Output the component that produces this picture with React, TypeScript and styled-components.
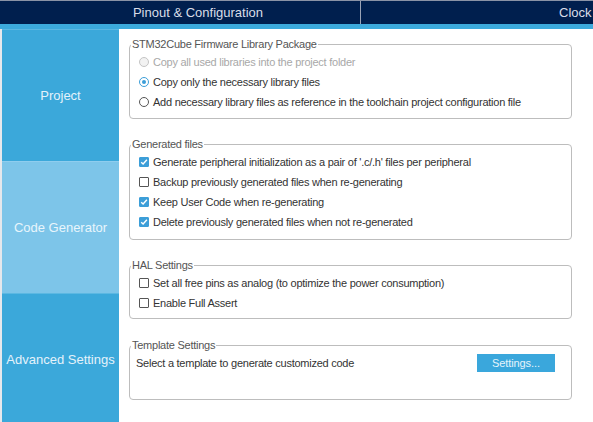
import React from "react"
import styled, { createGlobalStyle } from "styled-components"

const GlobalStyle = createGlobalStyle`
  html, body {
    margin: 0;
    padding: 0;
    background: #ffffff;
    font-family: "Liberation Sans", Arial, sans-serif;
  }
`

const Page = styled.div`
  width: 593px;
  height: 422px;
  overflow: hidden;
  display: flex;
  flex-direction: column;
  background: #ffffff;
`

const TopBar = styled.div`
  display: flex;
  height: 24px;
  background: #001f4e;
  border-top: 1px solid #8a93a6;
  box-sizing: border-box;
  flex: none;
`

const Tab = styled.div<{ width?: number; pad: number }>`
  ${(p) => (p.width ? `width: ${p.width}px; flex: none;` : "flex: 1;")}
  display: flex;
  align-items: center;
  justify-content: ${(p) => (p.width ? "center" : "flex-start")};
  padding-left: ${(p) => p.pad}px;
  box-sizing: border-box;
  color: #d8dde8;
  font-size: 13px;
  white-space: nowrap;
  overflow: hidden;
  border-right: ${(p) => (p.width ? "1px solid #9aa3b5" : "none")};
`

const Stripe = styled.div`
  height: 5px;
  background: #3caadc;
  flex: none;
`

const Body = styled.div`
  flex: 1;
  display: flex;
  min-height: 0;
`

const Sidebar = styled.div`
  width: 117px;
  margin-left: 2px;
  display: flex;
  flex-direction: column;
  flex: none;
  box-shadow: -2px 0 0 #e6e8ec;
`

const NavItem = styled.div<{ active?: boolean }>`
  height: 131px;
  flex: none;
  display: flex;
  align-items: center;
  justify-content: center;
  background: ${(p) => (p.active ? "#7dc5e9" : "#3ba8da")};
  border-top: 1px solid ${(p) => (p.active ? "#8fcdee" : "#5cb8e2")};
  color: ${(p) => (p.active ? "#e8f5fc" : "#e4f2fa")};
  font-size: 13px;
  white-space: nowrap;
`

const Content = styled.div`
  flex: 1;
  display: flex;
  flex-direction: column;
  gap: 19px;
  padding: 9px 21px 0 10px;
  letter-spacing: -0.25px;
`

const Group = styled.fieldset<{ padBottom: number; shift?: number }>`
  margin: ${(p) => p.shift || 0}px 0 0 0;
  padding: 1px 0 ${(p) => p.padBottom}px 0;
  border: 1px solid #bdbdbd;
  border-radius: 4px;
  min-width: 0;
`

const Legend = styled.legend`
  margin-left: 1px;
  padding: 0 1px 0 1px;
  font-size: 11px;
  line-height: 13px;
  color: #555555;
`

const Row = styled.label<{ disabled?: boolean }>`
  height: 20px;
  display: flex;
  align-items: center;
  gap: 4px;
  padding-left: 9px;
  font-size: 11px;
  color: ${(p) => (p.disabled ? "#a8a8a8" : "#333333")};
  white-space: nowrap;
`

const RadioMark = styled.span<{ checked?: boolean; disabled?: boolean }>`
  width: 10px;
  height: 10px;
  border-radius: 50%;
  box-sizing: border-box;
  border: 1px solid
    ${(p) => (p.disabled ? "#c4c4c4" : p.checked ? "#3c9ed8" : "#555555")};
  background: ${(p) => (p.disabled ? "#f2f2f2" : "#ffffff")};
  display: flex;
  align-items: center;
  justify-content: center;
  flex: none;
  &::after {
    content: "";
    display: ${(p) => (p.checked ? "block" : "none")};
    width: 4px;
    height: 4px;
    border-radius: 50%;
    background: #3c9ed8;
  }
`

const CheckMark = styled.span<{ checked?: boolean }>`
  width: 10px;
  height: 10px;
  box-sizing: border-box;
  border: 1px solid ${(p) => (p.checked ? "#3c9ed8" : "#555555")};
  background: ${(p) => (p.checked ? "#3c9ed8" : "#ffffff")};
  border-radius: 1px;
  display: flex;
  align-items: center;
  justify-content: center;
  flex: none;
`

const TemplateRow = styled.div`
  height: 20px;
  display: flex;
  align-items: center;
  justify-content: space-between;
  padding: 0 16px 0 6px;
  font-size: 11px;
  color: #333333;
`

const Button = styled.button`
  width: 78px;
  height: 18px;
  border: none;
  background: #3aa7dc;
  color: #e6f4fb;
  font-family: inherit;
  font-size: 11px;
  letter-spacing: -0.1px;
  padding: 0;
  cursor: pointer;
`

const Tick = () => (
  <svg width="8" height="8" viewBox="0 0 8 8">
    <path d="M1.2 4.2 L3.1 6 L6.9 1.8" fill="none" stroke="#ffffff" strokeWidth="1.4" />
  </svg>
)

const Radio: React.FC<{ label: string; checked?: boolean; disabled?: boolean }> = ({
  label,
  checked,
  disabled,
}) => (
  <Row disabled={disabled}>
    <RadioMark checked={checked} disabled={disabled} />
    {label}
  </Row>
)

const Check: React.FC<{ label: string; checked?: boolean }> = ({ label, checked }) => (
  <Row>
    <CheckMark checked={checked}>{checked && <Tick />}</CheckMark>
    {label}
  </Row>
)

export default function App() {
  return (
    <Page>
      <GlobalStyle />
      <TopBar>
        <Tab width={361} pad={36}>
          Pinout &amp; Configuration
        </Tab>
        <Tab pad={198}>Clock Configuration</Tab>
      </TopBar>
      <Stripe />
      <Body>
        <Sidebar>
          <NavItem>Project</NavItem>
          <NavItem active>Code Generator</NavItem>
          <NavItem>Advanced Settings</NavItem>
        </Sidebar>
        <Content>
          <Group padBottom={6}>
            <Legend>STM32Cube Firmware Library Package</Legend>
            <Radio label="Copy all used libraries into the project folder" disabled />
            <Radio label="Copy only the necessary library files" checked />
            <Radio label="Add necessary library files as reference in the toolchain project configuration file" />
          </Group>
          <Group padBottom={7}>
            <Legend>Generated files</Legend>
            <Check
              label="Generate peripheral initialization as a pair of '.c/.h' files per peripheral"
              checked
            />
            <Check label="Backup previously generated files when re-generating" />
            <Check label="Keep User Code when re-generating" checked />
            <Check label="Delete previously generated files when not re-generated" checked />
          </Group>
          <Group padBottom={5}>
            <Legend>HAL Settings</Legend>
            <Check label="Set all free pins as analog (to optimize the power consumption)" />
            <Check label="Enable Full Assert" />
          </Group>
          <Group padBottom={26} shift={1}>
            <Legend>Template Settings</Legend>
            <TemplateRow>
              Select a template to generate customized code
              <Button>Settings...</Button>
            </TemplateRow>
          </Group>
        </Content>
      </Body>
    </Page>
  )
}
